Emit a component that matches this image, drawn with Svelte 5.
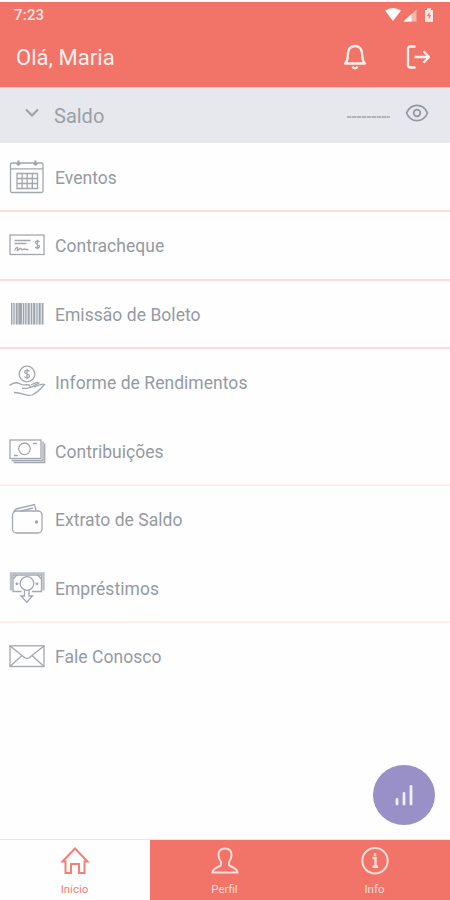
<script lang="ts">
	let balanceOpen = $state(false);
	let activeTab = $state('inicio');

	const items = [
		{ icon: 'calendar', label: 'Eventos', line: 'strong' },
		{ icon: 'check', label: 'Contracheque', line: 'strong' },
		{ icon: 'barcode', label: 'Emissão de Boleto', line: 'strong' },
		{ icon: 'hand', label: 'Informe de Rendimentos', line: 'none' },
		{ icon: 'bills', label: 'Contribuições', line: 'light' },
		{ icon: 'wallet', label: 'Extrato de Saldo', line: 'none' },
		{ icon: 'loan', label: 'Empréstimos', line: 'light' },
		{ icon: 'mail', label: 'Fale Conosco', line: 'none' }
	];

	const tabs = [
		{ id: 'inicio', label: 'Início' },
		{ id: 'perfil', label: 'Perfil' },
		{ id: 'info', label: 'Info' }
	];

	// x offset and width of each barcode stripe
	const stripes = [
		[4, 1.2], [6.5, 1], [9, 1.6], [11.5, 3.4], [16, 1], [18.2, 1.2], [20.8, 1.8],
		[24, 1], [26.2, 1.8], [29.4, 1], [31.8, 1.8], [35, 1.4]
	];
</script>

<div class="app">
	<header class="header">
		<div class="status-bar">
			<span class="time">7:23</span>
			<svg class="status-icons" width="50" height="16" viewBox="0 0 50 16">
				<path d="M0 3.5Q8 -1.5 16 3.5L8 14Z" fill="#fff" />
				<path d="M18.5 14.500L31.500 2.500V14.500Z" fill="#f9b7ae" />
				<path d="M18.500 14.500L26.500 7V14.500Z" fill="#fff" />
				<path d="M40 3h2V1.300h4V3h2v12h-8z" fill="#fde5e2" />
				<path d="M44.500 5l-2.500 4h1.700v3.500l2.400-4.300H44.500z" fill="#f27367" />
			</svg>
		</div>
		<div class="title-bar">
			<h1 class="greeting">Olá, Maria</h1>
			<button class="icon-btn bell" aria-label="Notificações">
				<svg width="24" height="28" viewBox="0 0 24 28">
					<path d="M2 20.500c2-2 2.800-4 2.800-8C4.800 7 7 3 12 3s7.200 4 7.200 9.500c0 4 .8 6 2.800 8z" />
					<path d="M9.500 23.500c.7 2.300 4.300 2.300 5 0" />
				</svg>
			</button>
			<button class="icon-btn logout" aria-label="Sair">
				<svg width="24" height="26" viewBox="0 0 24 26">
					<path d="M9.500 2.500H4.500Q2 2.500 2 5v16q0 2.500 2.500 2.500h5M8.500 13H23M17.500 7.200L23 13l-5.500 5.800" />
				</svg>
			</button>
		</div>
	</header>

	<button class="balance" onclick={() => (balanceOpen = !balanceOpen)}>
		<svg class="chevron" width="14" height="10" viewBox="0 0 14 10">
			<path d="M1 1.500l6 6 6-6" />
		</svg>
		<span class="balance-label">Saldo</span>
		<span class="dashes"></span>
		<svg class="eye" width="24" height="20" viewBox="0 0 24 20">
			<path d="M1.500 10C6-.200 18-.200 22.500 10 18 20.200 6 20.200 1.500 10z" />
			<circle cx="12" cy="10" r="3.300" />
		</svg>
	</button>

	<nav class="menu">
		{#each items as item}
			<a class="menu-item {item.line}" href="#{item.icon}">
				<svg class="menu-icon" width="40" height="40" viewBox="0 0 40 40">
					{#if item.icon === 'calendar'}
						<rect x="3.500" y="5" width="32.500" height="29.500" rx="1.500" />
						<path d="M3.500 10.800H36" />
						<path class="solid" d="M10.500 2.500h2v2l1.500 1.500-2.500 2L9 6l1.500-1.500zM27.500 2.500h2v2L31 6l-2.500 2L26 6l1.500-1.500z" />
						<path d="M10 15.500h20.500v15H10zM10 20.500h20.500M10 25.500h20.500M15.100 15.500v15M20.200 15.500v15M25.300 15.500v15" />
					{:else if item.icon === 'check'}
						<rect x="3" y="9" width="34" height="19.500" />
						<path d="M7.500 14.500h16M7.500 17.500h12M7.500 24.500c2-4 4-4 3-1s1 0 2.500-1 1 2.500 3 1 2 .5 5.500.2" />
						<path d="M32.500 15.800c-1-1.300-4-1.200-4 .8s4 1.500 4 3.700-3 2.200-4.200.7M30.500 13.800v9.500" />
					{:else if item.icon === 'barcode'}
						<rect class="barcode-bg" x="4" y="8" width="32.500" height="21.500" />
						{#each stripes as [x, w]}
							<rect class="solid" {x} y="8" width={w} height="21.500" />
						{/each}
					{:else if item.icon === 'hand'}
						<circle cx="20" cy="11" r="7.800" />
						<path d="M22.500 8.500c-1-1.800-5-1.500-5 .5s5 1.600 5 4-4 2.300-5.200.5M20 5.800v10.400" />
						<path d="M2.500 22.500c4-3.500 8-3.500 12-1 2 1 6-.5 8 .8 1.500 1.500 0 3-2.500 3h-5" />
						<path d="M23 24.500c3 0 8-5 9.500-4.200M27 24c3-1 8-4 10.500-2.500-3 3.500-7.500 8.500-12.500 10.500-6 2-8-2.500-18-2.500M24 22l5-2.300c2-.6 2.500.3 1.500 1.300" />
					{:else if item.icon === 'bills'}
						<rect x="3" y="8" width="31" height="18.500" />
						<path d="M36 9.500v19H4.500M37.700 11.500v19H6.500" />
						<circle cx="17.500" cy="16.800" r="5.800" />
						<path d="M26 11.500h4M7 23.500h4" />
					{:else if item.icon === 'wallet'}
						<rect x="5.500" y="11" width="29.500" height="22" rx="4" />
						<path d="M7 12.500c0-3 2-3.500 4-4L27.500 4.500l1.500 6M26 8l-12 3" />
						<circle class="solid" cx="29.500" cy="22" r="1.700" />
					{:else if item.icon === 'loan'}
						<path d="M14.500 22.500H6v-16.500h28.500v16.500H25" />
						<path class="band" d="M4 21.500V4.500h32.500v17" />
						<circle cx="20" cy="14.500" r="6.800" />
						<circle class="solid" cx="10" cy="14.800" r="1.400" />
						<circle class="solid" cx="30" cy="14.800" r="1.400" />
						<path d="M6 10l4-4M34.500 10l-4-4M17.500 21.500v5.500H14l5.800 6.200L25.500 27H22v-5.500" />
					{:else}
						<rect x="3" y="8.800" width="34" height="20.700" />
						<path d="M3 9l14.500 11.500q2.500 2 5 0L37 9M3.500 29l11.500-10.500M36.500 29L25 18.500" />
					{/if}
				</svg>
				<span>{item.label}</span>
			</a>
		{/each}
	</nav>

	<footer class="tab-bar">
		<button class="fab" aria-label="Gráficos">
			<svg width="18" height="22" viewBox="0 0 18 22">
				<path d="M2 20v-4.500M9 20V9.500M16 20V2.500" />
			</svg>
		</button>
		{#each tabs as tab}
			<button class="tab" class:active={activeTab === tab.id} onclick={() => (activeTab = tab.id)}>
				<svg width="30" height="30" viewBox="0 0 30 30">
					{#if tab.id === 'inicio'}
						<path d="M2.500 15.500L15 2.500l12.500 13h-3V27H19v-9h-8v9H5.500V15.500z" />
					{:else if tab.id === 'perfil'}
						<path d="M15 2.500c-4.500 0-7 3-6.500 7 .3 3 1 4.500 2.500 6.500v3c-1 2.200-8.500 2.500-8.500 7.500h25c0-5-7.500-5.300-8.500-7.500v-3c1.500-2 2.200-3.500 2.500-6.500.5-4-2-7-6.500-7z" />
					{:else}
						<circle cx="15" cy="14.800" r="12.700" />
						<path class="info-mark" d="M12.500 12H15.500v8.500M12.500 20.800h5.500M15 7v3" />
					{/if}
				</svg>
				<span>{tab.label}</span>
			</button>
		{/each}
	</footer>
</div>

<style>
	:global(body) {
		background: #fefefe;
	}

	.app {
		display: flex;
		flex-direction: column;
		box-sizing: border-box;
		width: 450px;
		height: 900px;
		padding-top: 2px;
		overflow: hidden;
		font-family: Roboto, sans-serif;
		color: #959aa1;
	}

	button {
		margin: 0;
		padding: 0;
		border: none;
		background: none;
		font-family: inherit;
		color: inherit;
		cursor: pointer;
	}

	svg {
		display: block;
		flex: none;
		fill: none;
	}

	.header {
		height: 85px;
		flex: none;
		background: #f27367;
		color: #fff;
	}

	.status-bar {
		display: flex;
		justify-content: space-between;
		align-items: center;
		height: 26px;
		padding: 0 15px 0 14px;
	}

	.time {
		font-size: 15px;
		font-weight: 500;
		letter-spacing: 0.2px;
		color: #fde5e2;
	}

	.title-bar {
		display: flex;
		align-items: center;
		height: 58px;
		padding: 0 20px 0 16px;
	}

	.greeting {
		flex: 1;
		margin: 0;
		font-size: 22px;
		font-weight: 400;
		letter-spacing: 0.05px;
		color: #fff1ef;
	}

	.icon-btn svg {
		stroke: #fff1ef;
		stroke-width: 2.3;
		stroke-linejoin: round;
	}

	.bell {
		margin-right: 39px;
	}

	.balance {
		display: flex;
		align-items: center;
		flex: none;
		height: 56px;
		padding: 0 21px 0 25px;
		background: #e6e8ed;
		border-top: 1px solid #d8cdd1;
	}

	.chevron {
		margin-top: -5px;
		stroke: #9a9fa8;
		stroke-width: 2;
	}

	.balance-label {
		flex: 1;
		margin-left: 15px;
		text-align: left;
		font-size: 20px;
		color: #9a9fa8;
	}

	.dashes {
		width: 43px;
		height: 2px;
		margin: 3px 15px 0 0;
		background: repeating-linear-gradient(90deg, #b0b4bb 0 4px, #cdd0d6 4px 5px);
	}

	.eye {
		margin-top: -5px;
		stroke: #9298a3;
		stroke-width: 1.8;
	}

	.menu {
		flex: 1;
		padding-top: 0.5px;
	}

	.menu-item {
		display: flex;
		align-items: center;
		box-sizing: border-box;
		height: 68.5px;
		padding: 2px 0 0 7px;
		border-bottom: 2px solid transparent;
		font-size: 17.5px;
		letter-spacing: 0.04px;
		color: #959aa1;
		text-decoration: none;
	}

	.menu-item.strong {
		border-color: #fbdcd9;
	}

	.menu-item.light {
		border-color: #fdeeee;
	}

	.menu-icon {
		margin-right: 8px;
		stroke: #a3a7ae;
		stroke-width: 1.3;
	}

	.solid {
		fill: #a0a5ac;
		stroke: none;
	}

	.band {
		stroke: #bcc0c6;
		stroke-width: 2.4;
	}

	.barcode-bg {
		fill: #dcdfe4;
		stroke: none;
	}

	.tab-bar {
		position: relative;
		display: flex;
		flex: none;
		height: 60px;
		border-top: 1px solid #e9e7e7;
	}

	.tab {
		display: flex;
		flex: 1;
		flex-direction: column;
		align-items: center;
		padding: 6px 1px 0 0;
		background: #f27367;
		color: #fde0dc;
		font-size: 11.5px;
	}

	.tab svg {
		margin-bottom: 6px;
		stroke: currentColor;
		stroke-width: 2;
	}

	.tab .info-mark {
		stroke-width: 2.4;
	}

	.tab.active {
		background: #fefefe;
		color: #f28076;
	}

	/* floats above the tab bar */
	.fab {
		position: absolute;
		right: 15px;
		bottom: 75px;
		display: flex;
		align-items: center;
		justify-content: center;
		width: 62px;
		height: 60px;
		border-radius: 50%;
		background: #9990c7;
	}

	.fab svg {
		stroke: #f0eefa;
		stroke-width: 2.8;
		stroke-linecap: round;
	}
</style>
